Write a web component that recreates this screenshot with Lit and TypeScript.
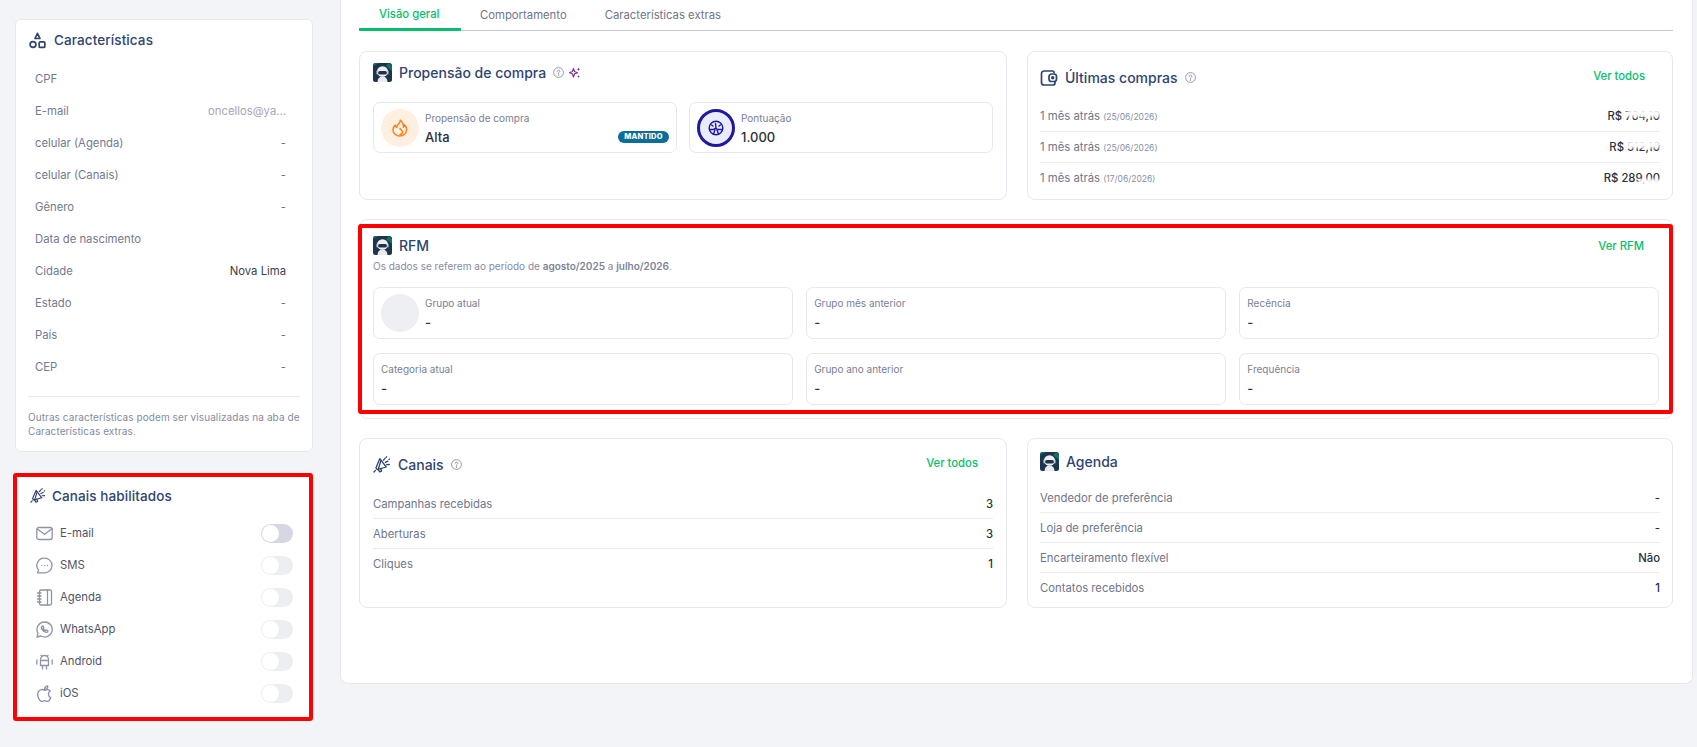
import { LitElement, html, css, svg } from "lit";
import { customElement } from "lit/decorators.js";

const robot = (s = 19) => html`<svg class="robot" width=${s} height=${s} viewBox="0 0 19 19">
  <rect width="19" height="19" rx="2.5" fill="#1d3650"/>
  <path d="M0 3 6 0H2.5A2.5 2.5 0 0 0 0 2.5ZM13 3l6 5V3l-3-3Z" fill="#17705f"/>
  <path d="M4.5 19c.2-3.6 2-5.5 5-5.5s4.8 1.900 5 5.500Z" fill="#e9ebef"/>
  <ellipse cx="9.500" cy="8.500" rx="5.500" ry="5.200" fill="#eceef2"/>
  <rect x="5" y="8" width="9" height="3.600" rx="1.800" fill="#1f3346"/>
  <rect x="3.500" y="7.500" width="1.600" height="4" rx=".8" fill="#c9ced6"/>
  <rect x="13.900" y="7.500" width="1.600" height="4" rx=".8" fill="#c9ced6"/>
</svg>`;

const megaphone = (s = 18) => html`<svg width=${s} height=${s} viewBox="0 0 18 18" fill="none" stroke="#2f4470" stroke-width="1.300" stroke-linecap="round" stroke-linejoin="round">
  <path d="M6.800 2.700 13.200 11 4.300 13.700 2.900 11.900Z"/>
  <path d="M8 4.500 5.400 12.800M5.100 13.300l1.500 2.600 2-.8-1-2.700"/>
  <path d="M1 16l1.400-1.600M10.500 4.200l1.700-2M12.300 6.300l2.600-1.200M13.600 8.700l2.700-.2M13.300 1.200l.3-.4M16 3.400l.5-.3"/>
</svg>`;

const shapes = html`<svg width="17" height="17" viewBox="0 0 17 17" fill="none" stroke="#2f4470" stroke-width="1.700" stroke-linejoin="round">
  <path d="M8.500 1.300 11 6.500H6Z"/><circle cx="4" cy="12.500" r="2.900"/><rect x="10.200" y="9.800" width="5.600" height="5.600" rx="1"/>
</svg>`;

const wallet = html`<svg width="18" height="18" viewBox="0 0 18 18" fill="none" stroke="#2f4470" stroke-width="1.700" stroke-linejoin="round">
  <path d="M14 4.300V3.500A1.500 1.500 0 0 0 12.500 2H4A2.500 2.500 0 0 0 1.500 4.500v9A2.500 2.500 0 0 0 4 16h9a2 2 0 0 0 2-2v-1.500"/>
  <rect x="9" y="5" width="7.500" height="7.500" rx="2.500"/><circle cx="12.700" cy="8.700" r=".9" fill="#2f4470"/>
</svg>`;

const help = html`<svg class="help" width="11" height="11" viewBox="0 0 11 11" fill="none" stroke="#8a90a3" stroke-width=".9">
  <circle cx="5.500" cy="5.500" r="4.900"/><path d="M4.200 4.300a1.300 1.300 0 1 1 2 1.100c-.5.300-.7.500-.7 1" stroke-linecap="round"/><circle cx="5.500" cy="8" r=".4" fill="#8a90a3"/>
</svg>`;

const sparkle = html`<svg class="spark" width="12" height="12" viewBox="0 0 12 12" fill="none" stroke="#7b2d9b" stroke-width="1.100" stroke-linejoin="round">
  <path d="M4.500 1.500 5.600 4.600 8.500 5.700 5.600 6.800 4.500 10 3.400 6.800.5 5.700 3.400 4.600Z"/>
  <path d="M9.500.5 10 1.800l1.300.5L10 2.800 9.500 4 9 2.800l-1.300-.5L9 1.800ZM9.500 8l.4 1.200 1.100.4-1.100.4-.4 1.500-.4-1.500L8 9.600l1.100-.4Z" fill="#7b2d9b" stroke="none"/>
</svg>`;

const flame = html`<svg width="16" height="18" viewBox="0 0 16 18" fill="none" stroke="#f7811e" stroke-width="1.500" stroke-linecap="round" stroke-linejoin="round">
  <path d="M8.200 1.200c.5 3-3.500 4.400-3.500 7.200-.9-.4-1.500-1.400-1.500-2.400C1.800 7.200 1 9 1 10.800 1 14.400 4 17 7.700 17c3.900 0 7-2.700 7-6.400 0-2.300-1-3.700-2.100-4.900 0 1.100-.4 1.800-1.200 2.400C11.600 5.300 10.300 2.700 8.200 1.200Z"/>
  <path d="M8 9.500c.4 1.500 2.500 1.800 2.500 3.700A2.600 2.600 0 0 1 8 15.500" />
</svg>`;

const gauge = html`<svg width="16" height="16" viewBox="0 0 16 16" fill="none" stroke="#1f1a9c" stroke-width="1.400" stroke-linecap="round">
  <circle cx="8" cy="8" r="6.800"/><path d="M1.500 9.500h4l2-1.500 2.500 1.500h4.500M8 8l-.5-4.500M5.500 14l1.500-4M10.500 14 9 10M3.600 5 5 6M12.400 5 11 6"/>
</svg>`;

const ci = (body: unknown) => svg`<svg width="17" height="17" viewBox="0 0 17 17" fill="none" stroke="#8d93a8" stroke-width="1.300" stroke-linecap="round" stroke-linejoin="round">${body}</svg>`;
const channelIcons: Record<string, unknown> = {
  "E-mail": ci(svg`<rect x=".8" y="2.500" width="15.400" height="12" rx="2"/><path d="M1.300 4 8.500 9.300 15.700 4"/>`),
  SMS: ci(svg`<path d="M8.700 1.200a7.300 7.300 0 0 1 0 14.600H1.500l1.100-2.600A7.300 7.300 0 0 1 8.700 1.200Z"/><path d="M5.800 8.500h.01M8.700 8.500h.01M11.600 8.500h.01"/>`),
  Agenda: ci(svg`<rect x="3.500" y="1" width="12" height="15" rx="1.500"/><path d="M11.500 1v15M1.500 4h3.500M1.500 7h3.500M1.500 10h3.500M1.500 13h3.500"/>`),
  WhatsApp: ci(svg`<path d="M8.700 1a7.500 7.500 0 1 1-3.700 14L1 16l1-3.800A7.500 7.500 0 0 1 8.700 1Z"/><path d="M6 5.200c-.8.600-.8 1.800 0 3.100.9 1.500 2.700 3 4.300 3 1 0 1.700-.6 1.700-1.400l-1.900-1-.9.800c-.9-.4-1.700-1.200-2.100-2.200l.7-.8-.7-1.800Z"/>`),
  Android: ci(svg`<path d="M4.500 6.500a4 4 0 0 1 8 0v6h-8ZM4.500 7.500h8M5 2.300 6 3.500M12 2.300 11 3.500M.8 7v4M16.200 7v4M6.500 12.500V16M10.500 12.500V16"/>`),
  iOS: ci(svg`<path d="M8.700 5.300C7.500 4.500 5.800 4.200 4.300 5 2 6.200 1.300 9 2 11.500c.6 2 2 4.800 3.900 4.800.9 0 1.700-.6 2.700-.6s1.800.6 2.700.6c1.700 0 3-2.300 3.500-3.800-1.500-.6-2.400-2-2.400-3.500 0-1.300.7-2.400 1.800-3.100-1.100-1.300-3.100-1.500-5.500-.6Z"/><path d="M8.500 4.800c0-2 1.300-3.500 3.300-3.800 0 2-1.300 3.500-3.300 3.800Z"/>`),
};

const traits: [string, string, string?][] = [
  ["CPF", ""],
  ["E-mail", "oncellos@ya…", "muted"],
  ["celular (Agenda)", "-"],
  ["celular (Canais)", "-"],
  ["Gênero", "-"],
  ["Data de nascimento", ""],
  ["Cidade", "Nova Lima", "dark"],
  ["Estado", "-"],
  ["País", "-"],
  ["CEP", "-"],
];

@customElement("app-root")
export class AppRoot extends LitElement {
  static styles = css`
    :host { display: flex; height: 747px; overflow: hidden; background: #f2f4f8; font-family: Inter, "Liberation Sans", sans-serif; color: #2b2f3a; box-sizing: border-box; }
    * { box-sizing: border-box; }
    svg { display: block; flex: none; }
    .side { width: 298px; margin: 19px 0 0 15px; flex: none; display: flex; flex-direction: column; gap: 22px; }
    .main { width: 1353px; margin-left: 27px; flex: none; height: 684px; background: #fff; border: 1px solid #e5e7ed; border-top: 0; border-radius: 0 0 8px 8px; padding: 0 19px 0 18px; }
    .scard { position: relative; background: #fff; border: 1px solid #e6e8ee; border-radius: 6px; padding: 12px 12px 13px; }
    .shead { display: flex; align-items: center; gap: 8px; height: 16px; font-size: 13.500px; font-weight: 500; color: #2f4470; padding-left: 1px; letter-spacing: .1px; }
    .traits { margin-top: 15px; }
    .trow { display: flex; justify-content: space-between; align-items: center; height: 32px; padding: 0 14px 0 7px; font-size: 11.300px; color: #727a8e; }
    .trow b { font-weight: 400; color: #70768a; }
    .trow b.muted { color: #a3a7b4; }
    .trow b.dark { color: #3a3f4e; }
    .divider { height: 1px; background: #e8e9ee; margin: 13px 0; }
    .note { font-size: 10px; line-height: 14px; color: #858b9f; letter-spacing: .08px; }
    .canais { padding: 13px 12px 11px; }
    .canais .shead { padding-left: 2px; gap: 6px; }
    .chs { margin-top: 13px; }
    .ch { display: flex; align-items: center; height: 32px; padding: 0 7px 0 8px; gap: 7px; font-size: 11.300px; color: #4e5466; }
    .ch span { flex: 1; }
    .tog { width: 32px; height: 19px; border-radius: 10px; background: #edeef2; padding: 1px; flex: none; }
    .tog.on { background: #d5d8e2; }
    .tog i { display: block; width: 17px; height: 17px; border-radius: 50%; background: #fff; }
    .mark { position: absolute; border: 4.500px solid #f00; border-radius: 3px; pointer-events: none; }
    .canais .mark { inset: -2px -1px -1px -3px; }
    .rfm .mark { inset: 4px -1px 4px -2px; }

    .tabs { display: flex; height: 31px; border-bottom: 1px solid #c6c6d3; font-size: 11.300px; color: #6f7688; }
    .tab { height: 31px; display: flex; align-items: center; padding: 0 20px 2px; }
    .tab.active { color: #05bf6b; font-weight: 500; position: relative; border-bottom: 3px solid #05bf6b; border-radius: 0 0 1px 1px; padding-bottom: 0; width: 102px; }
    .tab + .tab { padding: 0 0 2px; margin-left: 19px; }
    .tab:last-child { margin-left: 38px; }
    .grid { display: grid; grid-template-columns: 648px 646px; column-gap: 20px; margin-top: 20px; }
    .card { position: relative; background: #fff; border: 1px solid #e6e8ee; border-radius: 8px; padding: 11px 13px; }
    .wide { grid-column: 1 / 3; margin: 19px 0; height: 200px; padding-top: 16px; }
    .top { height: 149px; }
    .low { height: 170px; }
    .head { display: flex; align-items: center; height: 19px; gap: 7px; font-size: 14px; font-weight: 500; color: #2f4470; }
    .head .spark { margin-left: -2px; }
    .grow { flex: 1; }
    .link { font-size: 11.300px; font-weight: 500; color: #05bf6b; margin-right: 15px; padding-bottom: 4px; }
    .tiles { display: flex; gap: 12px; margin-top: 20px; }
    .tile { flex: 1; display: flex; align-items: center; gap: 6px; height: 51px; border: 1px solid #e6e8ee; border-radius: 7px; padding: 0 7px; min-width: 0; }
    .circle { width: 38px; height: 38px; border-radius: 50%; flex: none; display: flex; align-items: center; justify-content: center; }
    .c-or { background: #ffefe0; }
    .c-bl { background: #e9edfb; border: 3px solid #1f1a9c; }
    .c-gr { background: #eeeff2; }
    .tx { flex: 1; min-width: 0; }
    .lab { font-size: 10px; line-height: 16px; color: #7a8092; }
    .val { font-size: 13px; line-height: 18px; margin-top: 2px; font-weight: 500; color: #2b2f3a; }
    .valrow { display: flex; justify-content: space-between; align-items: center; margin-top: 2px; }
    .valrow .val { margin: 0; }
    .badge { height: 12px; width: 51px; border-radius: 6px; background: #0b6e99; color: #fff; font-size: 7.500px; font-weight: 800; display: flex; align-items: center; justify-content: center; letter-spacing: .2px; }
    .sub { font-size: 10px; line-height: 14px; margin-top: 4px; color: #858b9f; }
    .sub b { font-weight: 600; color: #7d8397; }
    .boxes { display: grid; grid-template-columns: repeat(3, 1fr); column-gap: 13.500px; row-gap: 14px; margin-top: 14px; }
    .boxes .tile { height: 52px; }
    .rows { font-size: 11.300px; color: #70768a; }
    .row { display: flex; justify-content: space-between; align-items: center; height: 30px; border-bottom: 1px solid #ebecf0; }
    .row:last-child { border-bottom: 0; }
    .row b { font-weight: 500; color: #2b2f3a; }
    .row small { font-size: 8.500px; color: #8a8f9f; }
    .buys { margin-top: 14px; }
    .buys .row { height: 31px; }
    .buys .row:last-child { height: 30px; }
    .top.right { padding: 16px 12px 0; }
    .low.c { padding: 16px 13px 0; }
    .low.a { padding: 13px 12px 0; }
    .r15 { margin-top: 15px; }
    .r12 { margin-top: 12px; }
    .red { position: relative; }
    .red::after { content: ""; position: absolute; right: 0; top: 1px; width: 33px; height: 7px; background: #fff; filter: blur(1.500px); }
    .red.c::after { top: auto; bottom: 1px; width: 22px; height: 5px; }
  `;

  private tile(label: string, value = "-", circle = false) {
    return html`<div class="tile">
      ${circle ? html`<div class="circle c-gr"></div>` : ""}
      <div class="tx"><div class="lab">${label}</div><div class="val">${value}</div></div>
    </div>`;
  }

  private row(label: unknown, value: unknown) {
    return html`<div class="row"><span>${label}</span><b>${value}</b></div>`;
  }

  render() {
    return html`
      <aside class="side">
        <section class="scard">
          <div class="shead">${shapes}<span>Características</span></div>
          <div class="traits">
            ${traits.map(([l, v, c]) => html`<div class="trow"><span>${l}</span><b class=${c ?? ""}>${v}</b></div>`)}
          </div>
          <div class="divider"></div>
          <div class="note">Outras características podem ser visualizadas na aba de Características extras.</div>
        </section>
        <section class="scard canais">
          <div class="shead">${megaphone(16)}<span>Canais habilitados</span></div>
          <div class="chs">
            ${Object.keys(channelIcons).map((k, i) => html`<div class="ch">${channelIcons[k]}<span>${k}</span><div class="tog ${i === 0 ? "on" : ""}"><i></i></div></div>`)}
          </div>
          <div class="mark"></div>
        </section>
      </aside>
      <main class="main">
        <nav class="tabs">
          <div class="tab active">Visão geral</div>
          <div class="tab">Comportamento</div>
          <div class="tab">Características extras</div>
        </nav>
        <div class="grid">
          <section class="card top">
            <div class="head">${robot()}<span>Propensão de compra</span>${help}${sparkle}</div>
            <div class="tiles">
              <div class="tile">
                <div class="circle c-or">${flame}</div>
                <div class="tx"><div class="lab">Propensão de compra</div>
                  <div class="valrow"><div class="val">Alta</div><div class="badge">MANTIDO</div></div>
                </div>
              </div>
              <div class="tile">
                <div class="circle c-bl">${gauge}</div>
                <div class="tx"><div class="lab">Pontuação</div><div class="val">1.000</div></div>
              </div>
            </div>
          </section>
          <section class="card top right">
            <div class="head">${wallet}<span>Últimas compras</span>${help}<span class="grow"></span><span class="link">Ver todos</span></div>
            <div class="rows buys">
              ${this.row(html`1 mês atrás <small>(25/06/2026)</small>`, html`<span class="red">R$ 764,10</span>`)}
              ${this.row(html`1 mês atrás <small>(25/06/2026)</small>`, html`<span class="red">R$ 512,10</span>`)}
              ${this.row(html`1 mês atrás <small>(17/06/2026)</small>`, html`<span class="red c">R$ 289,00</span>`)}
            </div>
          </section>
          <section class="card wide rfm">
            <div class="head">${robot()}<span>RFM</span><span class="grow"></span><span class="link" style="padding-bottom:0">Ver RFM</span></div>
            <div class="sub">Os dados se referem ao período de <b>agosto/2025</b> a <b>julho/2026</b>.</div>
            <div class="boxes">
              ${this.tile("Grupo atual", "-", true)}
              ${this.tile("Grupo mês anterior")}
              ${this.tile("Recência")}
              ${this.tile("Categoria atual")}
              ${this.tile("Grupo ano anterior")}
              ${this.tile("Frequência")}
            </div>
            <div class="mark"></div>
          </section>
          <section class="card low c">
            <div class="head">${megaphone()}<span>Canais</span>${help}<span class="grow"></span><span class="link">Ver todos</span></div>
            <div class="rows r15">
              ${this.row("Campanhas recebidas", "3")}
              ${this.row("Aberturas", "3")}
              ${this.row("Cliques", "1")}
            </div>
          </section>
          <section class="card low a">
            <div class="head">${robot()}<span>Agenda</span></div>
            <div class="rows r12">
              ${this.row("Vendedor de preferência", "-")}
              ${this.row("Loja de preferência", "-")}
              ${this.row("Encarteiramento flexível", "Não")}
              ${this.row("Contatos recebidos", "1")}
            </div>
          </section>
        </div>
      </main>
    `;
  }
}
